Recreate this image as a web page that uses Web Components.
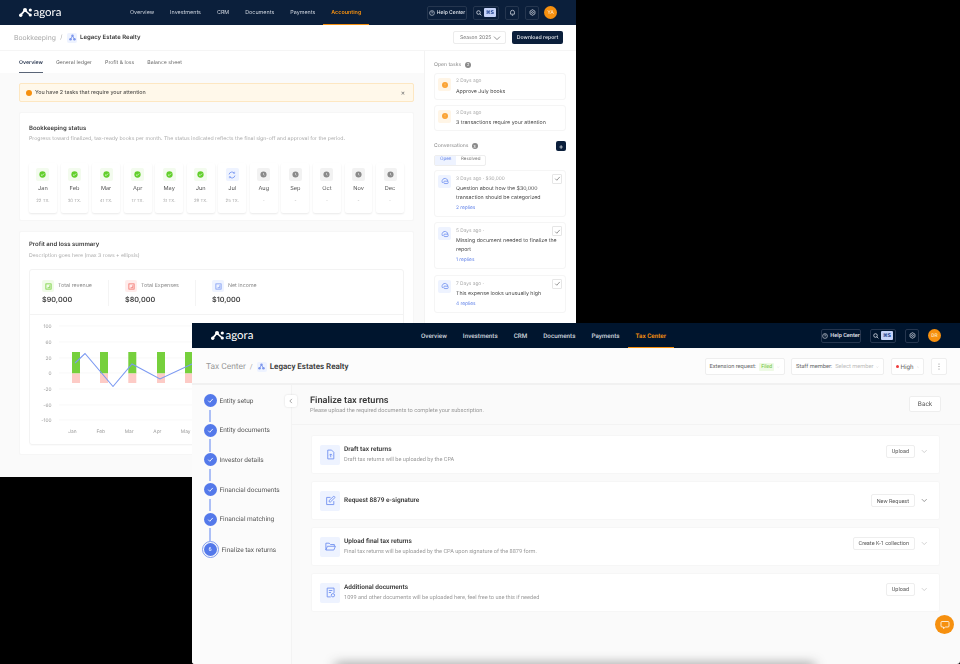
<!DOCTYPE html>
<html>
<head>
<meta charset="utf-8">
<title>Agora</title>
<style>
html, body { margin: 0; height: 100%; background: #000; overflow: hidden; text-rendering: geometricPrecision; }
#books { left: 0; top: 0; width: 576px; height: 477px; font-family: Inter, "Liberation Sans", sans-serif; filter: blur(.3px); }
#tax { left: 192px; top: 323px; width: 768px; height: 341px; font-family: Roboto, "Liberation Sans", sans-serif; border-radius: 0 0 3px 3px; filter: blur(.25px); }
#tail { left: 335px; top: 664px; width: 480px; height: 8px; background: rgba(30,30,30,.5); filter: blur(6px); }
</style>
</head>
<body>

<ag-window id="books">
    <ag-topbar bar="#0b1f3b" height="25" pad="19" start="122" logo="19" initials="YA" bell>
        <ag-link>Overview</ag-link>
        <ag-link>Investments</ag-link>
        <ag-link>CRM</ag-link>
        <ag-link>Documents</ag-link>
        <ag-link>Payments</ag-link>
        <ag-link active>Accounting</ag-link>
    </ag-topbar>
    <books-title></books-title>
    <books-body>
        <books-tabs slot="left"></books-tabs>
        <ag-alert slot="left">You have 2 tasks that require your attention</ag-alert>
        <status-card slot="left">
            <ag-month name="Jan" tx="22 TX." state="done"></ag-month>
            <ag-month name="Feb" tx="30 TX." state="done"></ag-month>
            <ag-month name="Mar" tx="41 TX." state="done"></ag-month>
            <ag-month name="Apr" tx="17 TX." state="done"></ag-month>
            <ag-month name="May" tx="31 TX." state="done"></ag-month>
            <ag-month name="Jun" tx="29 TX." state="done"></ag-month>
            <ag-month name="Jul" tx="25 TX." state="sync"></ag-month>
            <ag-month name="Aug" tx="-" state="wait"></ag-month>
            <ag-month name="Sep" tx="-" state="wait"></ag-month>
            <ag-month name="Oct" tx="-" state="wait"></ag-month>
            <ag-month name="Nov" tx="-" state="wait"></ag-month>
            <ag-month name="Dec" tx="-" state="wait"></ag-month>
        </status-card>
        <pnl-card slot="left"></pnl-card>

        <ag-heading slot="right" count="2">Open tasks</ag-heading>
        <ag-task slot="right" when="2 Days ago">Approve July books</ag-task>
        <ag-task slot="right" when="3 Days ago">3 transactions require your attention</ag-task>
        <convo-head slot="right"></convo-head>
        <ag-convo slot="right" when="3 Days ago · $30,000" replies="2 replies">Question about how the $30,000 transaction should be categorized</ag-convo>
        <ag-convo slot="right" when="5 Days ago ·" replies="1 replies">Missing document needed to finalize the report</ag-convo>
        <ag-convo slot="right" when="7 Days ago ·" replies="4 replies">This expense looks unusually high</ag-convo>
    </books-body>
</ag-window>

<ag-window id="tax">
    <ag-topbar bar="#00152e" height="25" pad="19" start="221" logo="19" initials="DR" large>
        <ag-link large>Overview</ag-link>
        <ag-link large>Investments</ag-link>
        <ag-link large>CRM</ag-link>
        <ag-link large>Documents</ag-link>
        <ag-link large>Payments</ag-link>
        <ag-link large active>Tax Center</ag-link>
    </ag-topbar>
    <tax-title></tax-title>
    <tax-body>
        <ag-step slot="steps">Entity setup</ag-step>
        <ag-step slot="steps">Entity documents</ag-step>
        <ag-step slot="steps">Investor details</ag-step>
        <ag-step slot="steps">Financial documents</ag-step>
        <ag-step slot="steps">Financial matching</ag-step>
        <ag-step slot="steps" current="6">Finalize tax returns</ag-step>

        <ag-doc icon="file" action="Upload" title="Draft tax returns">Draft tax returns will be uploaded by the CPA</ag-doc>
        <ag-doc icon="edit" action="New Request" title="Request 8879 e-signature" dark></ag-doc>
        <ag-doc icon="folder" action="Create K-1 collection" title="Upload final tax returns">Final tax returns will be uploaded by the CPA upon signature of the 8879 form.</ag-doc>
        <ag-doc icon="extra" action="Upload" title="Additional documents">1099 and other documents will be uploaded here, feel free to use this if needed</ag-doc>
    </tax-body>
    <chat-button></chat-button>
</ag-window>

<ag-window id="tail"></ag-window>

<script>
const CHEVRON = `<svg width="8" height="8" viewBox="0 0 8 8" fill="none" stroke="currentColor" stroke-width=".8"><path d="M1 2.6 4 5.6 7 2.6"/></svg>`;
const TICK = `<svg width="7" height="7" viewBox="0 0 8 8" fill="none" stroke="currentColor" stroke-width="1"><path d="M1.4 4.2 3.2 6 6.6 2.2"/></svg>`;
const BUILDING = `<svg width="7" height="7" viewBox="0 0 10 10" fill="#7d97ec"><circle cx="5" cy="2.4" r="1.8"/><circle cx="2.2" cy="7.6" r="1.8"/><circle cx="7.8" cy="7.6" r="1.8"/><path d="M4.3 3 1.8 7l.9.5L5 4l2.3 3.5.9-.5L5.7 3z"/></svg>`;

class Shadowed extends HTMLElement {
    constructor() {
        super();
        this.attachShadow({mode: "open"});
    }
    attr(name, fallback = "") {
        return this.getAttribute(name) ?? fallback;
    }
    connectedCallback() {
        this.shadowRoot.innerHTML = this.render();
    }
}

class AgWindow extends Shadowed {
    render() {
        return `<style>
        :host { display: flex; flex-direction: column; position: absolute; overflow: hidden; background: #fafafa; }
        </style><slot></slot>`;
    }
}

class AgTopbar extends Shadowed {
    render() {
        const large = this.hasAttribute("large");
        const bell = this.hasAttribute("bell") ? `<span class="tool"><svg width="7" height="7" viewBox="0 0 10 10" fill="none" stroke="#dfe4ec" stroke-width="1"><path d="M2.2 7.4V4.6a2.8 2.8 0 0 1 5.6 0v2.8zM4 9h2"/></svg></span>` : "";
        return `<style>
        :host { display: flex; flex: none; align-items: center; box-sizing: border-box; position: relative;
            height: ${this.attr("height")}px; padding: 0 ${this.attr("pad")}px; background: ${this.attr("bar")}; }
        .logo { display: flex; align-items: center; gap: 1.5px; width: ${this.attr("start") - 19}px; flex: none; color: #fff;
            font: 400 11.5px Lato, sans-serif; }
        nav { display: flex; height: 100%; }
        .tools { display: flex; align-items: center; margin-left: auto; color: #e4e8ef; }
        .box { display: flex; align-items: center; justify-content: center; gap: 2px; box-sizing: border-box; height: 14px;
            border: 1px solid #25364f; border-radius: 2px; font-size: ${large ? 5.6 : 5}px; font-weight: 500; }
        .help { width: 40px; }
        .search { width: 26px; margin-left: ${large ? 9 : 6}px; }
        kbd { font: 600 5px "DejaVu Sans", sans-serif; background: #c6d3f8; color: #1d3f8f; padding: 1.5px; border-radius: 1px; }
        .tool { display: flex; align-items: center; justify-content: center; box-sizing: border-box; width: 14px; height: 14px;
            margin-left: ${large ? 9 : 6}px; border: 1px solid #25364f; border-radius: 2px; }
        .avatar { display: flex; align-items: center; justify-content: center; width: 13px; height: 13px; margin-left: ${large ? 9 : 5}px;
            border-radius: 50%; background: #f6900f; color: #fde3bd; font-size: 5px; font-weight: 500; }
        </style>
        <div class="logo">
            <svg width="13" height="9" viewBox="0 0 13 9" fill="#fff"><circle cx="1.7" cy="7.2" r="1.7"/><circle cx="6" cy="2" r="2"/><circle cx="11.3" cy="2" r="1.6"/><circle cx="11.3" cy="7" r="1.6"/><path d="M1 6.6 5.4 1.4 6.6 2.6 2.4 7.8z"/><path d="M6 1.2 11.5 6.2 10.8 7.6 5.5 3z"/></svg>
            <span>agora</span>
        </div>
        <nav><slot></slot></nav>
        <div class="tools">
            <span class="box help"><svg width="6" height="6" viewBox="0 0 10 10" fill="none" stroke="#dfe4ec" stroke-width="1"><circle cx="5" cy="5" r="4"/><path d="M3.8 4a1.2 1.2 0 1 1 1.7 1.1L5 5.8"/></svg>Help Center</span>
            <span class="box search"><svg width="6" height="6" viewBox="0 0 10 10" fill="none" stroke="#dfe4ec" stroke-width="1.3"><circle cx="4.2" cy="4.2" r="3"/><path d="M6.4 6.4 9 9"/></svg><kbd>⌘S</kbd></span>
            ${bell}
            <span class="tool"><svg width="7" height="7" viewBox="0 0 10 10" fill="none" stroke="#dfe4ec" stroke-width="1"><path d="M5 1 8.5 3v4L5 9 1.5 7V3z"/><circle cx="5" cy="5" r="1.3"/></svg></span>
            <span class="avatar">${this.attr("initials")}</span>
        </div>`;
    }
}

class AgLink extends Shadowed {
    render() {
        const large = this.hasAttribute("large");
        return `<style>
        :host { display: flex; align-items: center; box-sizing: border-box; padding: 0 8px; font-size: ${large ? 6.3 : 5.4}px;
            font-weight: ${large ? 500 : 400}; color: #cfd5df; white-space: nowrap; }
        :host([active]) { color: #f6900f; font-weight: 600; box-shadow: inset 0 -1px 0 #f6900f; }
        </style><slot></slot>`;
    }
}

class BooksTitle extends Shadowed {
    render() {
        return `<style>
        :host { display: flex; flex: none; align-items: center; box-sizing: border-box; height: 26px; padding: 0 13px 0 14px;
            background: #fff; border-bottom: 1px solid #f5f5f5; }
        .crumb { font-size: 6.8px; color: #a8a8a8; }
        .sep { margin: 0 4.5px; font-size: 6px; color: #aaa; }
        .mark { display: flex; align-items: center; justify-content: center; width: 10px; height: 10px; margin-right: 3px; background: #eef3ff; border-radius: 2px; }
        b { font-size: 6px; font-weight: 600; color: #3a3a3a; }
        .season { display: flex; align-items: center; justify-content: space-between; box-sizing: border-box; width: 53px; height: 13px; margin-left: auto; padding: 0 4px 0 6px;
            border: 1px solid #ececec; border-radius: 2px; font-size: 5px; color: #777; }
        .report { display: flex; align-items: center; justify-content: center; width: 51px; height: 13px; margin-left: 6px; background: #0b1f3b; border-radius: 2px;
            font-size: 5.2px; font-weight: 500; color: #e8ebf0; }
        </style>
        <span class="crumb">Bookkeeping</span><span class="sep">/</span>
        <span class="mark">${BUILDING}</span><b>Legacy Estate Realty</b>
        <span class="season">Season 2025 ${CHEVRON}</span>
        <span class="report">Download report</span>`;
    }
}

class BooksBody extends Shadowed {
    render() {
        return `<style>
        :host { display: flex; flex: 1; min-height: 0; }
        .left { display: flex; flex-direction: column; width: 424px; flex: none; }
        .right { display: flex; flex-direction: column; flex: 1; box-sizing: border-box; padding: 0 10px 0 9px; background: #fff; border-left: 1px solid #f3f3f3; }
        </style>
        <div class="left"><slot name="left"></slot></div>
        <div class="right"><slot name="right"></slot></div>`;
    }
}

class BooksTabs extends Shadowed {
    render() {
        return `<style>
        :host { display: flex; flex: none; gap: 13px; box-sizing: border-box; height: 22px; padding: 0 19px; background: #fff; }
        span { display: flex; align-items: center; padding-top: 1px; font-size: 5.2px; color: #666; }
        .on { color: #26344d; font-weight: 600; box-shadow: inset 0 -1px 0 #5a6577; }
        </style>
        <span class="on">Overview</span><span>General ledger</span><span>Profit &amp; loss</span><span>Balance sheet</span>`;
    }
}

class AgAlert extends Shadowed {
    render() {
        return `<style>
        :host { display: flex; flex: none; align-items: center; box-sizing: border-box; height: 19px; margin: 10px 10px 10px 19px; padding: 0 8px 0 6px;
            background: #fff8ea; border: 1px solid #fde7c2; border-radius: 2px; font-size: 5.35px; font-weight: 500; color: #55534f; }
        i { width: 6px; height: 6px; margin-right: 3px; border-radius: 50%; background: #f6900f; }
        span { margin-left: auto; font-size: 6.5px; color: #777; font-style: normal; }
        </style><i></i><slot></slot><span>×</span>`;
    }
}

class StatusCard extends Shadowed {
    render() {
        return `<style>
        :host { display: block; flex: none; box-sizing: border-box; height: 109px; margin: 0 10px 10px 19px; padding: 10.5px 9px 0;
            background: #fff; border: 1px solid #f6f6f6; border-radius: 2px; }
        h3 { margin: 0; font-size: 6px; line-height: 9px; font-weight: 600; color: #3a3a3a; }
        p { margin: 2.5px 0 0; font-size: 5.2px; line-height: 8px; color: #aaa; white-space: nowrap; }
        .grid { display: grid; grid-template-columns: repeat(12, 1fr); gap: 3.7px; margin-top: 20px; }
        </style>
        <h3>Bookkeeping status</h3>
        <p>Progress toward finalized, tax-ready books per month. The status indicated reflects the final sign-off and approval for the period.</p>
        <div class="grid"><slot></slot></div>`;
    }
}

class AgMonth extends Shadowed {
    render() {
        const state = this.attr("state");
        const marks = {
            done: `<svg width="7" height="7" viewBox="0 0 8 8"><circle cx="4" cy="4" r="3.6" fill="#63cf2d"/><path d="M2.3 4.1 3.5 5.3 5.8 2.9" fill="none" stroke="#fff" stroke-width=".8"/></svg>`,
            sync: `<svg width="8" height="8" viewBox="0 0 10 10" fill="none" stroke="#6f8ff0" stroke-width="1"><path d="M1.3 4.3A3.8 3.8 0 0 1 8 2.7M8.7 5.7A3.8 3.8 0 0 1 2 7.3"/><path d="M8.3 .9V2.9H6.3M1.7 9.1V7.1H3.7" stroke-width=".7"/></svg>`,
            wait: `<svg width="7" height="7" viewBox="0 0 8 8"><circle cx="4" cy="4" r="3.5" fill="#8a8a8a"/><path d="M4 2.3V4.2L5.2 4.9" fill="none" stroke="#fff" stroke-width=".6"/></svg>`,
        };
        const tint = {done: "#f3fbee", sync: "#eef3ff", wait: "#f2f2f2"}[state];
        return `<style>
        :host { display: flex; flex-direction: column; align-items: center; box-sizing: border-box; height: 50px; padding-top: 5px;
            background: #fff; border-radius: 2px; box-shadow: 0 1px 2px rgba(0,0,0,.09); }
        .mark { display: flex; align-items: center; justify-content: center; width: 13px; height: 13px; background: ${tint}; border-radius: 2px; }
        .name { margin-top: 5px; font-size: 5.6px; line-height: 7px; color: #555; }
        .tx { margin-top: 4.5px; font-size: 4.3px; line-height: 7px; color: #aaa; }
        </style>
        <span class="mark">${marks[state]}</span>
        <span class="name">${this.attr("name")}</span>
        <span class="tx">${this.attr("tx")}</span>`;
    }
}

class PnlCard extends Shadowed {
    render() {
        const ticks = [["100", 326], ["60", 342], ["20", 358], ["0", 373], ["-20", 389], ["-60", 405], ["-100", 420]];
        const top = 315;
        const grid = ticks.map(([label, y]) => `<line x1="29" x2="375" y1="${y - top}" y2="${y - top}" stroke="#f5f5f5" stroke-width=".7"/>
            <text x="21.5" y="${y - top + 1.8}" text-anchor="end">${label}</text>`).join("");
        const bars = [72, 100, 128.3, 157, 185, 213, 241].map((x) => `<rect x="${x - 30}" y="${352 - top}" width="8" height="21.5" fill="#76d03c"/>
            <rect x="${x - 30}" y="${373.5 - top}" width="8" height="9.5" fill="#fdcbc6"/>`).join("");
        const months = ["Jan", "Feb", "Mar", "Apr", "May"].map((m, i) => `<text x="${42.5 + i * 28.3}" y="${433 - top}" text-anchor="middle">${m}</text>`).join("");
        return `<style>
        :host { display: block; flex: none; box-sizing: border-box; height: 224px; margin: 0 10px 0 19px; padding: 8px 9px 0;
            background: #fff; border: 1px solid #f6f6f6; border-radius: 2px; }
        h3 { margin: 0; font-size: 6px; line-height: 9px; font-weight: 600; color: #3a3a3a; }
        p { margin: 3px 0 0; font-size: 5.2px; line-height: 8px; color: #aaa; }
        .panel { height: 174px; margin-top: 9px; border: 1px solid #f3f3f3; border-radius: 3px; box-shadow: 0 1px 1px rgba(0,0,0,.02); }
        .stats { display: flex; box-sizing: border-box; height: 45px; padding: 10px 0 0; border-bottom: 1px solid #f3f3f3; }
        svg { display: block; font: 4.8px Inter, sans-serif; fill: #999; }
        </style>
        <h3>Profit and loss summary</h3>
        <p>Description goes here (max 3 rows + ellipsis)</p>
        <div class="panel">
            <div class="stats">
                <ag-stat tone="green" label="Total revenue" value="$90,000" style="width:79px;padding-left:12px"></ag-stat>
                <ag-stat tone="red" label="Total Expenses" value="$80,000" style="width:87px;padding-left:16px"></ag-stat>
                <ag-stat tone="blue" label="Net income" value="$10,000" style="width:90px;padding-left:16px;border:0"></ag-stat>
            </div>
            <svg width="375" height="128" viewBox="0 0 375 128">
                ${grid}${bars}
                <polyline points="45,48 55,38.5 83,71.5 102,49 130,64 162,49 190,41" fill="none" stroke="#7b99f2" stroke-width="1.1"/>
                ${months}
            </svg>
        </div>`;
    }
}

class AgStat extends Shadowed {
    render() {
        const tones = {green: ["#f0fbe8", "#71cf35"], red: ["#ffeceb", "#f26d66"], blue: ["#eef3ff", "#7b99f2"]};
        const [tint, ink] = tones[this.attr("tone")];
        return `<style>
        :host { display: block; box-sizing: border-box; height: 26px; border-right: 1px solid #f4f4f4; }
        .top { display: flex; align-items: center; gap: 4px; font-size: 5.3px; color: #888; white-space: nowrap; }
        .mark { display: flex; align-items: center; justify-content: center; width: 12px; height: 12px; background: ${tint}; border-radius: 2px; }
        b { display: block; margin-top: 2px; font-size: 7.2px; line-height: 12px; font-weight: 600; color: #444; }
        </style>
        <div class="top"><span class="mark"><svg width="7" height="7" viewBox="0 0 8 8" fill="none" stroke="${ink}" stroke-width=".9"><rect x="1" y="1" width="6" height="6"/><path d="M5.5 2.6V5.4H3"/></svg></span>${this.attr("label")}</div>
        <b>${this.attr("value")}</b>`;
    }
}

class AgHeading extends Shadowed {
    render() {
        return `<style>
        :host { display: flex; flex: none; align-items: center; gap: 4px; height: 22px; padding-top: 5px; box-sizing: border-box; font-size: 5.1px; color: #888; }
        i { display: flex; align-items: center; justify-content: center; width: 6px; height: 6px; border-radius: 50%; background: #8a8a8a; color: #fff; font: 4px Inter, sans-serif; }
        </style><slot></slot><i>${this.attr("count")}</i>`;
    }
}

class AgTask extends Shadowed {
    render() {
        return `<style>
        :host { display: flex; flex: none; align-items: flex-start; gap: 5px; box-sizing: border-box; height: 26.5px; margin-bottom: 5px; padding: 4px 3px 0;
            background: #fff; border: 1px solid #f5f5f5; border-radius: 3px; }
        .mark { display: flex; align-items: center; justify-content: center; width: 13px; height: 13px; background: #fff5e6; border-radius: 2px; flex: none; }
        .mark svg { display: block; }
        small { display: block; font-size: 4.8px; line-height: 7px; color: #aaa; }
        div { font-size: 5.25px; line-height: 8px; color: #444; margin-top: 2.5px; white-space: nowrap; }
        </style>
        <span class="mark"><svg width="6" height="6" viewBox="0 0 6 6"><circle cx="3" cy="3" r="3" fill="#fba334"/><path d="M3 1.5V3.4M3 4.1V4.6" stroke="#fdd39a" stroke-width=".6"/></svg></span>
        <section><small>${this.attr("when")}</small><div><slot></slot></div></section>`;
    }
}

class ConvoHead extends Shadowed {
    render() {
        return `<style>
        :host { display: block; flex: none; margin-top: 5px; }
        .row { display: flex; align-items: center; justify-content: space-between; height: 10px; }
        .label { display: flex; align-items: center; gap: 3px; font-size: 5.1px; color: #888; }
        i { display: flex; align-items: center; justify-content: center; width: 6px; height: 6px; border-radius: 50%; background: #8a8a8a; color: #fff; font: normal 4px Inter, sans-serif; }
        .add { display: flex; align-items: center; justify-content: center; width: 10px; height: 10px; background: #0b1f3b; border-radius: 2px; color: #fff; font-size: 7px; line-height: 1; }
        .seg { display: flex; width: fit-content; margin: 4px 0 4px; border: 1px solid #eee; border-radius: 2px; font-size: 4.5px; line-height: 8.5px; color: #777; }
        .seg span { padding: 0 4.5px; }
        .seg .on { background: #eef3ff; color: #5f80e8; padding: 0 5px; }
        </style>
        <div class="row"><span class="label">Conversations <i>3</i></span><span class="add">+</span></div>
        <div class="seg"><span class="on">Open</span><span>Resolved</span></div>`;
    }
}

class AgConvo extends Shadowed {
    render() {
        return `<style>
        :host { display: flex; flex: none; gap: 5px; box-sizing: border-box; margin-bottom: 5.5px; padding: 5px 3px 4px;
            background: #fff; border: 1px solid #f5f5f5; border-radius: 3px; position: relative; }
        .mark { display: flex; align-items: center; justify-content: center; width: 13px; height: 13px; margin-top: -1px; background: #eef3ff; border-radius: 2px; flex: none; }
        small { display: block; font-size: 4.8px; line-height: 7px; color: #aaa; }
        .text { font-size: 5.25px; line-height: 9px; color: #444; margin-top: 2px; }
        .more { font-size: 4.8px; line-height: 7px; color: #5f80e8; margin-top: 2px; }
        .check { position: absolute; top: 3px; right: 3px; display: flex; align-items: center; justify-content: center; box-sizing: border-box;
            width: 10px; height: 10px; border: 1px solid #e6e6e6; border-radius: 1px; color: #888; }
        </style>
        <span class="mark"><svg width="8" height="8" viewBox="0 0 10 10" fill="none" stroke="#6f8ff0" stroke-width="1"><path d="M2 7.5A3.6 3.6 0 1 1 8.5 5.5"/><rect x="3.5" y="5.2" width="5.5" height="3" rx="1.2"/></svg></span>
        <section><small>${this.attr("when")}</small><div class="text"><slot></slot></div><div class="more">${this.attr("replies")}</div></section>
        <span class="check">${TICK}</span>`;
    }
}

class TaxTitle extends Shadowed {
    render() {
        return `<style>
        :host { display: flex; flex: none; align-items: center; box-sizing: border-box; height: 36px; margin-top: 1px; padding: 1px 13px 0 14px;
            background: #fcfcfc; border-bottom: 2px solid #f1f1f1; }
        .crumb { font-size: 8.4px; color: #999; }
        .sep { margin: 0 4px; font-size: 7px; color: #aaa; }
        .mark { display: flex; align-items: center; justify-content: center; width: 10px; height: 10px; margin-right: 3px; background: #eef3ff; border-radius: 2px; }
        b { font-size: 8px; font-weight: 600; color: #3a3a3a; }
        .pick { display: flex; align-items: center; gap: 3px; box-sizing: border-box; height: 17px; margin-left: 6.5px; padding: 0 4px; background: #fff;
            border: 1px solid #eee; border-radius: 2px; font-size: 5.7px; color: #666; white-space: nowrap; }
        .pick svg { margin-left: auto; color: #aaa; }
        .filed { padding: 1px 2px; background: #eefae5; color: #6cc433; border-radius: 1px; font-size: 5.2px; }
        .none { color: #bbb; }
        .dot { flex: none; width: 3px; height: 3px; margin-right: -1px; border-radius: 50%; background: #ef3b3b; }
        .high { font-size: 6.3px; }
        .more { display: flex; align-items: center; justify-content: center; box-sizing: border-box; width: 16px; height: 17px; margin-left: 7px; background: #fff; border: 1px solid #eee; border-radius: 2px; }
        </style>
        <span class="crumb">Tax Center</span><span class="sep">/</span>
        <span class="mark">${BUILDING}</span><b>Legacy Estates Realty</b>
        <span class="pick" style="width:80px;margin-left:auto">Extension request: <span class="filed">Filed</span>${CHEVRON}</span>
        <span class="pick" style="width:93px">Staff member: <span class="none">Select member</span>${CHEVRON}</span>
        <span class="pick high" style="width:33.5px"><i class="dot"></i>High${CHEVRON}</span>
        <span class="more"><svg width="2" height="7" viewBox="0 0 2 7" fill="#888"><circle cx="1" cy="1" r=".6"/><circle cx="1" cy="3.5" r=".6"/><circle cx="1" cy="6" r=".6"/></svg></span>`;
    }
}

class TaxBody extends Shadowed {
    render() {
        return `<style>
        :host { display: flex; flex: 1; min-height: 0; position: relative; }
        .steps { display: flex; flex-direction: column; box-sizing: border-box; width: 100px; flex: none; padding: 1px 0 0 11.5px; border-right: 1px solid #f3f3f3; background: #fbfbfb; }
        .collapse { position: absolute; left: 93px; top: 10px; display: flex; align-items: center; justify-content: center; width: 12px; height: 12px;
            background: #fff; border-radius: 2px; box-shadow: 0 0 2px rgba(0,0,0,.15); color: #777; }
        main { flex: 1; min-width: 0; padding-right: 20px; }
        .head { display: flex; align-items: center; justify-content: space-between; box-sizing: border-box; height: 40px; margin: 0 -20px 10px 0; padding: 0 19px 0 18px; border-bottom: 1px solid #f3f3f3; }
        h2 { margin: 0; font-size: 9.2px; line-height: 11px; font-weight: 600; color: #3a3a3a; }
        p { margin: 1px 0 0; font-size: 5.65px; line-height: 8px; color: #999; }
        .back { display: flex; align-items: center; justify-content: center; width: 32px; height: 16px; margin-top: -1px; box-sizing: border-box; background: #fff; border: 1px solid #eee; border-radius: 2px; font-size: 6.5px; color: #555; }
        .list { display: flex; flex-direction: column; gap: 7px; margin-left: 19px; }
        </style>
        <div class="steps"><slot name="steps"></slot></div>
        <span class="collapse"><svg width="6" height="6" viewBox="0 0 8 8" fill="none" stroke="currentColor" stroke-width=".9"><path d="M5.2 1.2 2.4 4 5.2 6.8"/></svg></span>
        <main>
            <div class="head">
                <div><h2>Finalize tax returns</h2><p>Please upload the required documents to complete your subscription.</p></div>
                <span class="back">Back</span>
            </div>
            <div class="list"><slot></slot></div>
        </main>`;
    }
}

class AgStep extends Shadowed {
    render() {
        const current = this.attr("current");
        return `<style>
        :host { display: flex; align-items: center; height: 29.6px; position: relative; font-size: 6.5px; font-weight: 400; color: #555; white-space: nowrap; }
        :host([current]) { height: 34px; margin-top: -1px; padding-left: 1px; }
        .dot { display: flex; align-items: center; justify-content: center; width: 13px; height: 13px; margin-right: 3px; border-radius: 50%; background: #5479ea; color: #fff; flex: none; position: relative; }
        :host([current]) .dot { outline: .7px solid #7f9bef; outline-offset: 1px; font-size: 5.5px; margin-left: -1px; margin-right: 5px; }
        :host(:not([current])) .dot::after { content: ""; position: absolute; left: 5.5px; top: 15.5px; width: 2px; height: 12.5px; background: #adc0f6; }
        </style>
        <span class="dot">${current || TICK}</span><slot></slot>`;
    }
}

class AgDoc extends Shadowed {
    render() {
        const icons = {
            file: `<path d="M2.5 1H6L8 3V9H2.5z"/><path d="M5.2 4.5V7.5M4 5.7 5.2 4.5 6.4 5.7"/>`,
            edit: `<path d="M8 5.5V8.7H1.5V2.2H5"/><path d="M3.8 6.3V5L8 1 9.2 2.2 5 6.3z"/>`,
            folder: `<path d="M.8 8.2V2H3.8L5 3.2H8.5V4.8"/><path d="M.8 8.2 2.2 4.8H9.5L8 8.2z"/>`,
            extra: `<path d="M2 1H8.2V5.5M5.2 9H2V1"/><path d="M3.5 3.2H6.7M3.5 5H5.5"/><circle cx="7.2" cy="7.5" r="1.5"/>`,
        };
        const sub = this.textContent.trim() ? `<p><slot></slot></p>` : "";
        const lift = sub ? "margin-top: -7px;" : "";
        return `<style>
        :host { display: flex; align-items: center; box-sizing: border-box; height: 39px; padding: 0 11.75px 0 8px; background: #fff; border: 1px solid #f6f6f6; border-radius: 2px; }
        .mark { display: flex; align-items: center; justify-content: center; width: 20px; height: 20px; margin-right: 4px; background: #eef3ff; border-radius: 2px; flex: none; }
        h4 { margin: 0; font-size: 6.5px; line-height: 9px; font-weight: 600; color: #3a3a3a; }
        p { margin: 2px 0 0; font-size: 5.6px; line-height: 8px; color: #999; white-space: nowrap; }
        button { margin-left: auto; height: 13px; padding: 0 5px; box-sizing: border-box; background: #fff; border: 1px solid #eee; border-radius: 2px; font: 5.5px Roboto, sans-serif; color: #555; white-space: nowrap; ${lift} }
        .chev { display: flex; margin-left: 5.75px; color: ${this.hasAttribute("dark") ? "#666" : "#bbb"}; ${lift} }
        .chev svg { width: 6.5px; height: 6.5px; }
        </style>
        <span class="mark"><svg width="11" height="11" viewBox="0 0 10 10" fill="none" stroke="#6f8ff0" stroke-width=".8">${icons[this.attr("icon")]}</svg></span>
        <div><h4>${this.attr("title")}</h4>${sub}</div>
        <button>${this.attr("action")}</button>
        <span class="chev">${CHEVRON}</span>`;
    }
}

class ChatButton extends Shadowed {
    render() {
        return `<style>
        :host { position: absolute; left: 743px; top: 292px; display: flex; align-items: center; justify-content: center; width: 19px; height: 19px; border-radius: 50%; background: #f6900f; }
        </style>
        <svg width="10" height="10" viewBox="0 0 10 10" fill="none" stroke="#fff" stroke-width=".8"><path d="M2 1.5H8Q9 1.5 9 2.5V6Q9 7 8 7H5.5L3.5 8.5V7H2Q1 7 1 6V2.5Q1 1.5 2 1.5z"/></svg>`;
    }
}

customElements.define("ag-window", AgWindow);
customElements.define("ag-topbar", AgTopbar);
customElements.define("ag-link", AgLink);
customElements.define("books-title", BooksTitle);
customElements.define("books-body", BooksBody);
customElements.define("books-tabs", BooksTabs);
customElements.define("ag-alert", AgAlert);
customElements.define("status-card", StatusCard);
customElements.define("ag-month", AgMonth);
customElements.define("pnl-card", PnlCard);
customElements.define("ag-stat", AgStat);
customElements.define("ag-heading", AgHeading);
customElements.define("ag-task", AgTask);
customElements.define("convo-head", ConvoHead);
customElements.define("ag-convo", AgConvo);
customElements.define("tax-title", TaxTitle);
customElements.define("tax-body", TaxBody);
customElements.define("ag-step", AgStep);
customElements.define("ag-doc", AgDoc);
customElements.define("chat-button", ChatButton);
</script>
</body>
</html>
